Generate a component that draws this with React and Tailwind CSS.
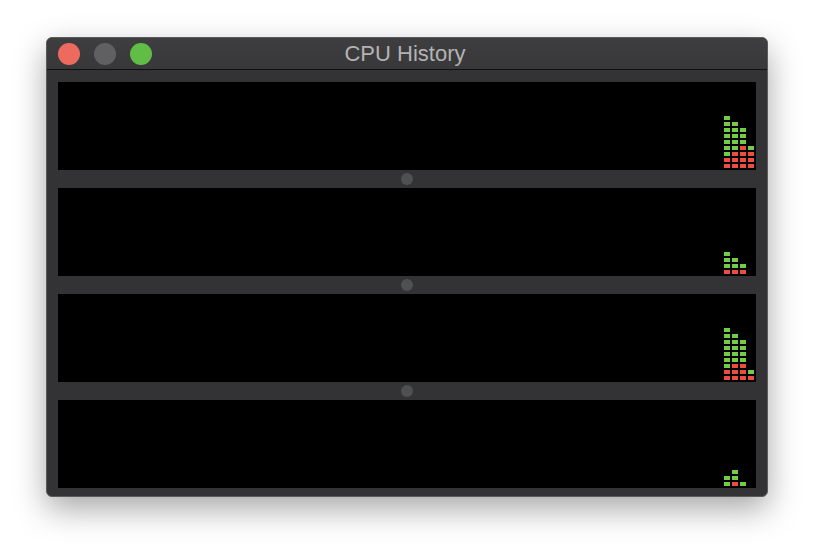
import React from 'react';

// each column: [green cells, red cells], top to bottom
const panels = [
  [[7, 2], [5, 3], [3, 4], [1, 3]],
  [[3, 1], [2, 1], [1, 1], [0, 0]],
  [[7, 2], [5, 3], [4, 3], [1, 1]],
  [[2, 0], [2, 1], [1, 0], [0, 0]],
];

const Column = ({ green, red }) => (
  <div className="flex w-[6px] flex-col gap-[2px]">
    {Array.from({ length: green }).map((_, i) => (
      <div key={'g' + i} className="h-[4px] w-[6px] bg-[#72cc45]" />
    ))}
    {Array.from({ length: red }).map((_, i) => (
      <div key={'r' + i} className="h-[4px] w-[6px] bg-[#ee4c3f]" />
    ))}
  </div>
);

const Panel = ({ cols }) => (
  <div className="flex h-[88px] items-end justify-end gap-[2px] bg-black pb-[2px] pr-[2px]">
    {cols.map(([g, r], i) => (
      <Column key={i} green={g} red={r} />
    ))}
  </div>
);

const Divider = () => (
  <div className="flex h-[18px] items-center justify-center bg-[#333335]">
    <div className="h-[12px] w-[12px] rounded-full bg-[#4f5051]" />
  </div>
);

export default function App() {
  return (
    <div className="h-[552px] w-[814px] bg-white pl-[46px] pt-[37px]" style={{ fontFamily: '"Liberation Sans", Arial, sans-serif' }}>
      <div className="w-[722px] overflow-hidden rounded-[6px] border border-[#5b5b5d] bg-[#333335] shadow-[0_12px_32px_rgba(0,0,0,0.35)]">
        {/* Title bar */}
        <div className="grid h-[32px] grid-cols-[1fr_auto_1fr] items-center border-b border-[#101010] bg-gradient-to-b from-[#3e3e40] to-[#38383a] pr-[4px]">
          <div className="flex items-center gap-[14px] pl-[11px]">
            <span className="h-[22px] w-[22px] rounded-full bg-[#ed6a5e]" />
            <span className="h-[22px] w-[22px] rounded-full bg-[#606062]" />
            <span className="h-[22px] w-[22px] rounded-full bg-[#62bd47]" />
          </div>
          <div className="text-[22px] leading-none text-[#b3b3b3]">CPU History</div>
          <div />
        </div>

        {/* Graphs */}
        <div className="px-[11px] pb-[8px] pt-[12px]">
          <Panel cols={panels[0]} />
          <Divider />
          <Panel cols={panels[1]} />
          <Divider />
          <Panel cols={panels[2]} />
          <Divider />
          <Panel cols={panels[3]} />
        </div>
      </div>
    </div>
  );
}
